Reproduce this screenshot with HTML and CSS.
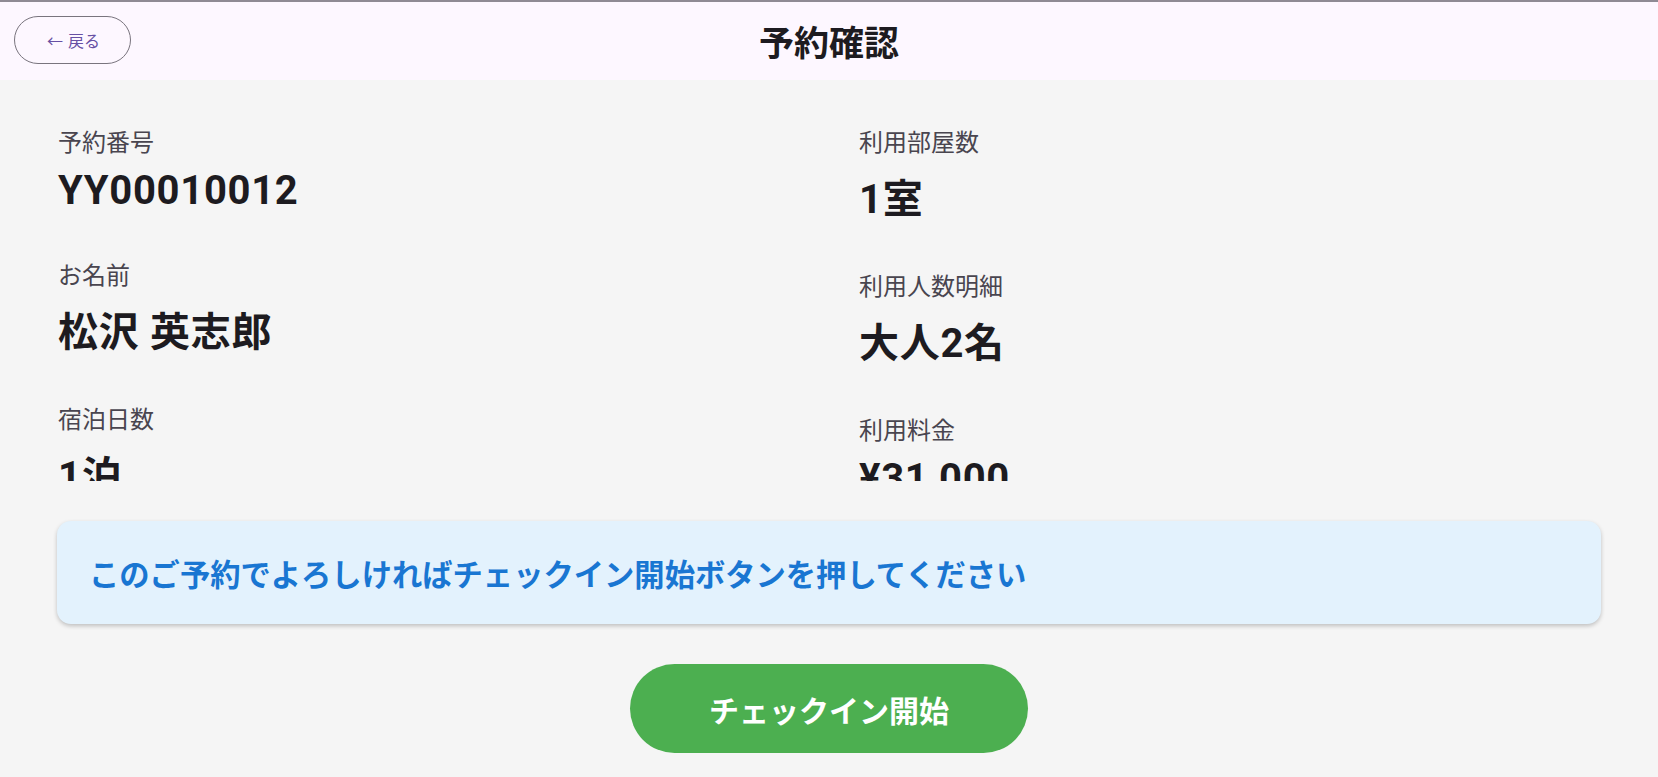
FILE: index.html
```html
<!DOCTYPE html>
<html lang="ja">
<head>
<meta charset="utf-8">
<title>予約確認</title>
<link rel="stylesheet" href="styles.css">
</head>
<body>
<div class="app">
  <header class="topbar">
    <div class="topbar-left">
      <button class="back-btn" type="button">← 戻る</button>
    </div>
    <h1 class="title">予約確認</h1>
    <div class="topbar-right"></div>
  </header>
  <main class="main">
    <section class="details">
      <div class="col">
        <div class="item">
          <div class="label">予約番号</div>
          <div class="value">YY00010012</div>
        </div>
        <div class="item">
          <div class="label">お名前</div>
          <div class="value">松沢 英志郎</div>
        </div>
        <div class="item">
          <div class="label">宿泊日数</div>
          <div class="value">1泊</div>
        </div>
      </div>
      <div class="col">
        <div class="item">
          <div class="label">利用部屋数</div>
          <div class="value">1室</div>
        </div>
        <div class="item">
          <div class="label">利用人数明細</div>
          <div class="value">大人2名</div>
        </div>
        <div class="item">
          <div class="label">利用料金</div>
          <div class="value">¥31,000</div>
        </div>
      </div>
    </section>
    <div class="notice">このご予約でよろしければチェックイン開始ボタンを押してください</div>
    <div class="actions">
      <button class="checkin-btn" type="button">チェックイン開始</button>
    </div>
  </main>
</div>
</body>
</html>
```
FILE: styles.css
```css
* {
  box-sizing: border-box;
}

html, body {
  margin: 0;
  padding: 0;
}

body {
  font-family: Roboto, "Noto Sans CJK JP", sans-serif;
  background: #f5f5f5;
  color: #1d1b20;
  width: 1658px;
  height: 777px;
  overflow: hidden;
}

.app {
  display: flex;
  flex-direction: column;
  height: 777px;
}

.topbar {
  height: 80px;
  flex: none;
  background: #fdf7ff;
  border-top: 2px solid #8f8a94;
  display: grid;
  grid-template-columns: 1fr auto 1fr;
  align-items: center;
  padding: 0 14px;
}

.topbar-left {
  display: flex;
  align-items: center;
}

.back-btn {
  width: 117px;
  height: 48px;
  border: 1px solid #79747e;
  border-radius: 24px;
  background: transparent;
  color: #6750a4;
  font-family: Roboto, "Noto Sans CJK JP", sans-serif;
  font-size: 16px;
  padding: 0 0 0 2px;
  margin-top: -2px;
  word-spacing: 1px;
}

.title {
  margin: 0;
  font-size: 35px;
  font-weight: 700;
  color: #1d1b20;
  margin-top: -2px;
}

.main {
  flex: 1;
  display: flex;
  flex-direction: column;
}

.details {
  height: 401px;
  overflow: hidden;
  padding: 43px 58px 0;
  display: grid;
  grid-template-columns: 1fr 1fr;
  column-gap: 60px;
  align-items: start;
}

.item {
  margin-bottom: 42px;
}

.label {
  font-size: 24px;
  color: #49454f;
  margin-bottom: 9px;
}

.value {
  font-size: 40px;
  font-weight: 700;
  letter-spacing: 0.7px;
  color: #1d1b20;
}

.notice {
  margin: 40px 57px 0;
  height: 103px;
  padding: 0 32px;
  display: flex;
  align-items: center;
  background: #e3f2fd;
  border-radius: 14px;
  box-shadow: 0 2px 4px rgba(0, 0, 0, 0.22);
  color: #1976d2;
  font-size: 30.3px;
  font-weight: 700;
}

.actions {
  display: flex;
  justify-content: center;
  margin-top: 40px;
}

.checkin-btn {
  width: 398px;
  height: 89px;
  border: none;
  border-radius: 45px;
  background: #4caf50;
  color: #ffffff;
  font-family: Roboto, "Noto Sans CJK JP", sans-serif;
  font-size: 30px;
  font-weight: 700;
  padding: 0;
}
```
